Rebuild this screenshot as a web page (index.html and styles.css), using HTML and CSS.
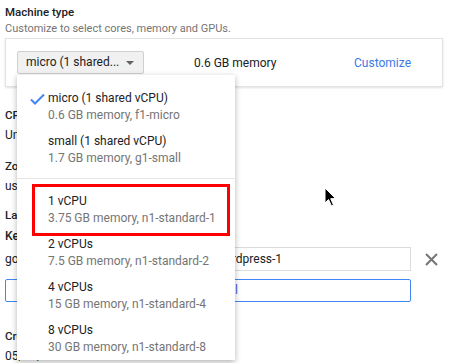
FILE: index.html
```html
<!DOCTYPE html>
<html lang="en">
<head>
  <meta charset="UTF-8">
  <title>Machine type</title>
  <link rel="stylesheet" href="styles.css">
</head>
<body>

  <div class="page">
    <div class="field">
      <div class="field-title">Machine type</div>
      <div class="field-hint">Customize to select cores, memory and GPUs.</div>

      <div class="machine-card">
        <div class="select-wrap">
          <div class="select">micro (1 shared...<span class="caret"></span></div>

          <div class="menu">
            <div class="menu-item checked">
              <svg class="check" width="15" height="12" viewBox="0 0 15 12"><path d="M1 6.5 L5 10.5 L14 1.5" fill="none" stroke="#4285f4" stroke-width="2"/></svg>
              <div class="item-name">micro (1 shared vCPU)</div>
              <div class="item-desc">0.6 GB memory, f1-micro</div>
            </div>
            <div class="menu-item">
              <div class="item-name">small (1 shared vCPU)</div>
              <div class="item-desc">1.7 GB memory, g1-small</div>
            </div>
            <div class="menu-divider"></div>
            <div class="menu-item marked">
              <div class="item-name">1 vCPU</div>
              <div class="item-desc">3.75 GB memory, n1-standard-1</div>
            </div>
            <div class="menu-item">
              <div class="item-name">2 vCPUs</div>
              <div class="item-desc">7.5 GB memory, n1-standard-2</div>
            </div>
            <div class="menu-item">
              <div class="item-name">4 vCPUs</div>
              <div class="item-desc">15 GB memory, n1-standard-4</div>
            </div>
            <div class="menu-item">
              <div class="item-name">8 vCPUs</div>
              <div class="item-desc">30 GB memory, n1-standard-8</div>
            </div>
          </div>
        </div>

        <span class="memory">0.6 GB memory</span>
        <a class="link">Customize</a>
      </div>
    </div>

    <div class="field section">
      <div class="field-title">CPU platform</div>
      <div class="field-value">Unknown CPU Platform</div>
    </div>

    <div class="field section">
      <div class="field-title">Zone</div>
      <div class="field-value">us-central1-f</div>
    </div>

    <div class="field section labels-field">
      <div class="field-title">Labels</div>
      <div class="labels">
        <div class="col-head">Key</div>
        <div class="col-head">Value</div>
        <div></div>

        <div class="key">goog-dm</div>
        <div class="input">wordpress-1</div>
        <svg class="remove" width="13" height="13" viewBox="0 0 13 13"><path d="M1 1 L12 12 M12 1 L1 12" stroke="#757575" stroke-width="2"/></svg>

        <div class="add-label">+ Add label</div>
      </div>
    </div>

    <div class="field section created">
      <div class="field-title">Creation time</div>
      <div class="field-value">05/14/2019</div>
    </div>
  </div>

  <!-- mouse pointer -->
  <svg class="pointer" width="14" height="21" viewBox="0 0 14 21"><path d="M1 1 L1 16 L4.5 12.5 L7.5 19 L9.5 18 L6.7 11.7 L11.5 11.5 Z" fill="#000" stroke="#fff" stroke-width="1"/></svg>

</body>
</html>
```

FILE: styles.css
```css
:root {
  --text: #202124;
  --muted: #757575;
  --blue: #4285f4;
  --link: #3b78e7;
  --line: #dadce0;
}

html, body {
  height: 100%;
  overflow: hidden;
}

body {
  margin: 0;
  font-family: Roboto, 'Noto Sans', sans-serif;
  font-size: 12px;
  color: var(--text);
  background-color: #fff;
}

.page {
  padding: 3px 11px 0 5px;
}

.field-title {
  font-weight: 500;
  line-height: 18px;
}

.field-title:first-child {
  font-size: 11.5px;
}

.field-hint {
  font-size: 11px;
  color: var(--muted);
  line-height: 16px;
  margin-bottom: 1px;
}

.field-value {
  line-height: 20px;
  margin-top: 1px;
}

.section {
  margin-top: 12px;
}

.field:nth-child(2) {
  margin-top: 19px;
}

.machine-card {
  display: flex;
  align-items: center;
  border: 1px solid #e3e3e3;
  box-shadow: 0 1px 2px rgba(0,0,0,0.12);
  padding: 12px 15px 12px 11px;
}

.select-wrap {
  position: relative;
}

.select {
  width: 109px;
  height: 21px;
  line-height: 21px;
  padding: 0 8px;
  border: 1px solid #cfcfcf;
  border-radius: 2px;
  background-color: #f1f1f1;
  position: relative;
  white-space: nowrap;
}

.caret {
  position: absolute;
  right: 9px;
  top: 9px;
  border-left: 4px solid transparent;
  border-right: 4px solid transparent;
  border-top: 4px solid #5f6368;
}

.memory {
  margin-left: 50px;
}

.link {
  margin-left: auto;
  color: var(--link);
  padding: 0 16px;
}

/* dropdown */
.menu {
  position: absolute;
  left: 0;
  top: 24px;
  width: 218px;
  padding-top: 10px;
  background-color: #fff;
  box-shadow: 0 2px 6px rgba(0,0,0,0.3);
  z-index: 2;
}

.menu-item {
  position: relative;
  padding: 5px 0 4px 31px;
  line-height: 17px;
}

.item-desc {
  color: var(--muted);
}

.check {
  position: absolute;
  left: 13px;
  top: 8px;
}

.menu-divider {
  height: 1px;
  background-color: #e6e6e6;
  margin: 7px 0 9px;
}

.menu-item.marked::after {
  content: '';
  position: absolute;
  left: 15px;
  right: 5px;
  top: -4px;
  bottom: -5px;
  border: 3px solid #ff0000;
}

/* labels */
.labels-field {
  margin-top: 10px;
}

.labels {
  display: grid;
  grid-template-columns: 192px 1fr 24px;
  column-gap: 8px;
  align-items: center;
}

.col-head {
  font-weight: 500;
  line-height: 18px;
  margin: 3px 0 2px;
}

.key {
  line-height: 24px;
}

.input {
  height: 22px;
  line-height: 22px;
  padding: 0 10px;
  border: 1px solid var(--line);
}

.remove {
  justify-self: center;
}

.add-label {
  grid-column: 1 / 3;
  margin-top: 8px;
  height: 21px;
  line-height: 21px;
  text-align: center;
  color: #3367d6;
  border: 1px solid var(--blue);
  border-radius: 2px;
}

.created {
  margin-top: 25px;
}

.pointer {
  position: absolute;
  left: 324px;
  top: 187px;
}
```
